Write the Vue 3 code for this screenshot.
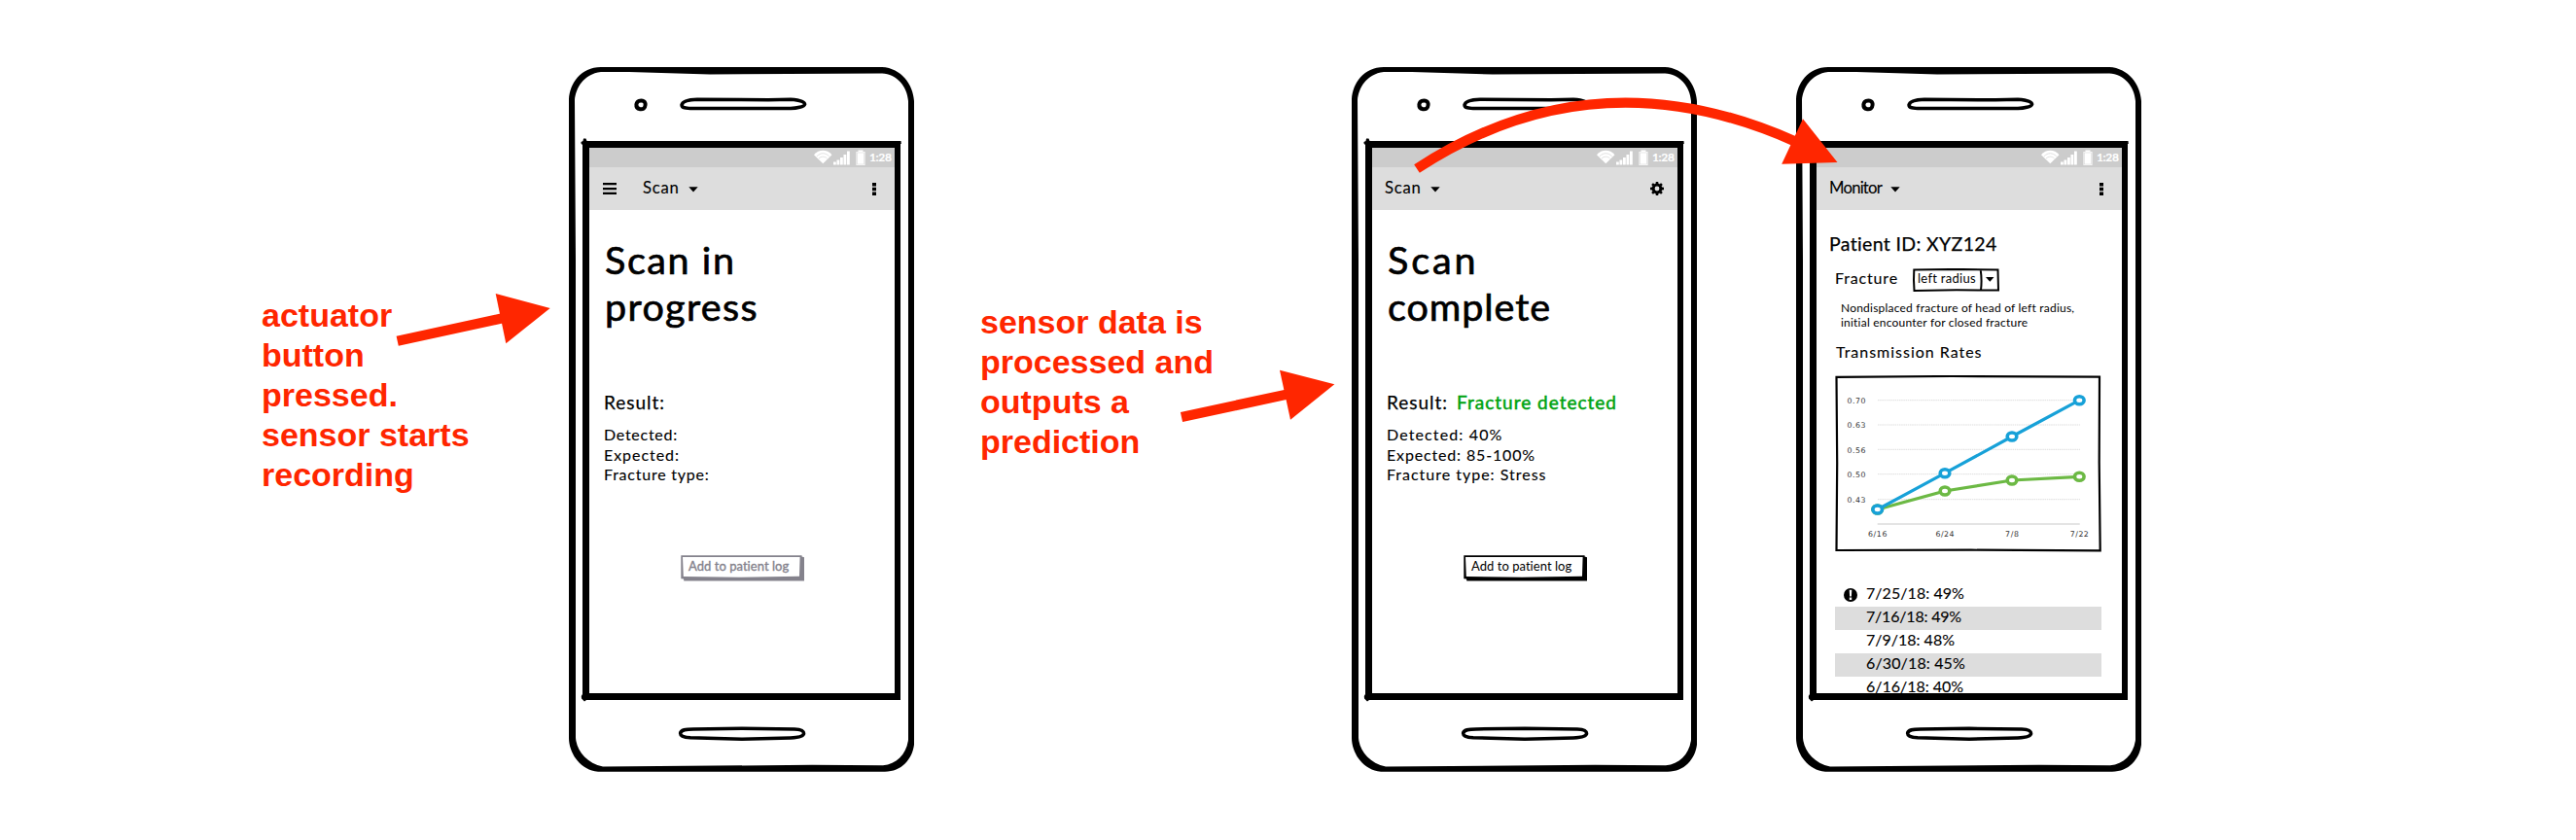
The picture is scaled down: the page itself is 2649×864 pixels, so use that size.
<script setup>
// Spreads the letters of a label so that it fills the given width in pixels.
const vFit = {
  mounted(el, { value }) {
    const natural = el.getBoundingClientRect().width
    el.style.letterSpacing = (value - natural) / el.textContent.length + 'px'
  },
}

const phones = [
  {
    id: 'progress', menu: true, label: 'Scan', labelWidth: 37.5, action: 'more',
    title: [['Scan in', 134.5], ['progress', 158]],
    result: null,
    details: [['Detected:', 76], ['Expected:', 78], ['Fracture type:', 108.5]],
    disabled: true,
  },
  {
    id: 'complete', menu: false, label: 'Scan', labelWidth: 37.5, action: 'gear',
    title: [['Scan', 93.5], ['complete', 168]],
    result: 'Fracture detected',
    details: [['Detected: 40%', 119.5], ['Expected: 85-100%', 153], ['Fracture type: Stress', 164.5]],
    disabled: false,
  },
  { id: 'monitor', menu: false, label: 'Monitor', labelWidth: 54, action: 'more', monitor: true },
]

const gridLines = [
  { y: 25.7, label: '0.70' },
  { y: 51, label: '0.63' },
  { y: 76.3, label: '0.56' },
  { y: 101.7, label: '0.50' },
  { y: 127.7, label: '0.43' },
]
const dates = [
  { x: 43.7, label: '6/16', width: 19.5 },
  { x: 113, label: '6/24', width: 19 },
  { x: 182, label: '7/8', width: 14 },
  { x: 251.3, label: '7/22', width: 19 },
]
const series = [
  { color: '#6cb944', values: [138, 119, 108, 104.3] },
  { color: '#17a1d8', values: [138, 100.7, 63, 25.7] },
]
const linePoints = (s) => s.values.map((y, i) => `${dates[i].x},${y}`).join(' ')

const log = [
  { text: '7/25/18: 49%', width: 101, alert: true },
  { text: '7/16/18: 49%', width: 98 },
  { text: '7/9/18: 48%', width: 91 },
  { text: '6/30/18: 45%', width: 102 },
  { text: '6/16/18: 40%', width: 100 },
]
const signalBars = [3, 5, 7.5, 10.5, 14]
</script>

<template>
  <main class="board">
    <template v-for="phone in phones" :key="phone.id">
      <p v-if="phone.id === 'progress'" class="note note-first">
        actuator<br />button<br />pressed.<br />sensor starts<br />recording
      </p>
      <p v-if="phone.id === 'complete'" class="note note-second">
        sensor data is<br />processed and<br />outputs a<br />prediction
      </p>

      <section class="phone" :class="phone.id">
        <svg class="shell" viewBox="-4 -4 363 733" width="363" height="733">
          <path
            fill-rule="evenodd"
            d="M0 33 C1 17 12 0 33 0 L322 0 C342 1 354 18 355 35 L355 697 C353 712 342 724.7 325 724.7 L30 724.7 C11 723 0 705 0 690 Z
               M6 34 C7 22 15 7 33 5 L62 5 L145 7.5 L322 6.5 C337 7 348 20 349 35 L349 692 C347 707 337 717 323 718.3 L250 717.8 L35 719.5 C18 716 8 703 7 690 L7 200 Z"
          />
          <path
            class="line"
            d="M116 39 C117 35 124 33.5 132 33.3 L205 33.8 L228 33.3 C238 34 242.6 36 242.6 38.3 C242 40.8 234 42.4 228 42.6 L128 42.6 C120 42.5 116 42 116 39Z"
          />
          <path
            class="line"
            d="M114.6 685.3 C115 681.7 120 681 128 680.9 L178 680.3 L232 680.9 C239 681.2 241.6 683 241.6 685.3 C241.6 688.4 236 689.7 228 690 L178 691.2 L125 689.8 C119 689.5 114.6 688.3 114.6 685.3Z"
          />
          <path class="line camera" d="M72 34.8 C76 33.6 79 35.6 78.6 39 C78.4 42.4 76 43.6 73.2 43.2 C70 42.8 69.2 40.5 69.4 38.4 C69.8 36.3 70.6 35.2 72 34.8Z" />
          <path
            fill-rule="evenodd"
            d="M14.5 76 L15 73.5 L17.5 73.5 L18.5 76 L341.5 76 L341.8 79 L341 79 L341 651 L18 651 L16 652.5 L13 649.5 L12.8 647 L14 645 L14 80 L12.5 78.5 L12.5 77Z
               M21 83 V644 H335 V83Z"
          />
        </svg>

        <div class="screen">
          <div class="status">
            <svg viewBox="0 0 54 16" width="54" height="16">
              <path fill="#fff" d="M0 5.200 C5 -.6 13.600 -.6 18.500 5.200 L9.300 14.200Z" />
              <g fill="none" stroke="#ccc" stroke-width=".6">
                <path d="M2.800 6.900 C7 2.700 11.700 2.700 15.800 6.900" />
                <path d="M5 9 C7.600 6.600 11 6.600 13.600 9" />
              </g>
              <rect v-for="(h, i) in signalBars" :key="h" :x="20 + i * 3.5" :y="15.500 - h" width="2.800" :height="h" fill="#fff" />
              <path fill="#fff" d="M43.500 2 h2 v-1.400 h5 v1.400 h2 v14 h-9z" />
              <rect x="44.500" y="3" width="7" height="12" fill="none" stroke="#ddd" stroke-width=".7" />
            </svg>
            <span v-fit="22.500">1:28</span>
          </div>

          <header class="toolbar">
            <svg v-if="phone.menu" class="menu" viewBox="0 0 14 12" width="14" height="12">
              <path d="M0 0h14v2.300H0zM0 4.900h14v2.300H0zM0 9.700h14v2.300H0z" />
            </svg>
            <span v-fit="phone.labelWidth" class="label">{{ phone.label }}</span>
            <svg class="caret" viewBox="0 0 10 6" width="10" height="6"><path d="M.3.300h9.400L5 5.600z" /></svg>
            <svg v-if="phone.action === 'more'" class="action more" viewBox="0 0 4 13" width="4" height="13">
              <path d="M0 0h4v3.500H0zM0 4.700h4v3.500H0zM0 9.500h4v3.500H0z" />
            </svg>
            <svg v-else class="action" viewBox="-7 -7 14 14" width="14" height="14">
              <circle r="3.900" fill="none" stroke="#000" stroke-width="3" />
              <path
                v-for="a in 8" :key="a" :transform="`rotate(${a * 45})`"
                d="M-1.400 -4.800L-1.200 -7H1.200L1.400 -4.800z"
              />
            </svg>
          </header>

          <div v-if="phone.monitor" class="monitor-body">
            <h2 class="patient"><span v-fit="173">Patient ID: XYZ124</span></h2>
            <div class="field">
              <span v-fit="65" class="field-name">Fracture</span>
              <div class="select">
                <svg class="outline" viewBox="0 0 89 24" width="89" height="24">
                  <path d="M1.300 1.500 L45 .9 L87.500 1.600 L88 22.500 L45 22.300 L1.500 22.900 L1 12Z M69.700 1.300 Q71.300 12 70 22.500" />
                  <path class="solid" d="M75 9h8.500l-4.200 4.700z" />
                </svg>
                <span v-fit="59.500">left radius</span>
              </div>
            </div>
            <p class="description">
              <span v-fit="240">Nondisplaced fracture of head of left radius,</span><br />
              <span v-fit="192.500">initial encounter for closed fracture</span>
            </p>
            <h3 class="rates"><span v-fit="150.500">Transmission Rates</span></h3>

            <svg class="chart" viewBox="0 0 274 182" width="274" height="182">
              <path class="box" d="M1.500 1.800 L120 1 L272 1.700 L271.700 90 L272.700 180.300 L140 179.700 L1.500 180 L2.200 90Z" />
              <g v-for="line in gridLines" :key="line.label">
                <line class="grid" x1="44" x2="252" :y1="line.y" :y2="line.y" />
                <text x="12.500" :y="line.y + 3.200" textLength="19">{{ line.label }}</text>
              </g>
              <line class="axis" x1="43.700" x2="251.700" y1="153" y2="153" />
              <text v-for="d in dates" :key="d.label" class="date" :x="d.x" y="166.300" :textLength="d.width">{{ d.label }}</text>
              <g v-for="s in series" :key="s.color" :stroke="s.color">
                <polyline :points="linePoints(s)" />
                <ellipse v-for="(y, i) in s.values" :key="i" :cx="dates[i].x" :cy="y" rx="4.800" ry="4" />
              </g>
            </svg>

            <ul class="log">
              <li v-for="row in log" :key="row.text">
                <svg v-if="row.alert" class="alert" viewBox="-7 -7 14 14" width="14" height="14">
                  <circle r="7" />
                  <path fill="#fff" d="M-1.300 -5.200h2.600L.9 1.400H-.9zM-1.200 2.600h2.400v2.300h-2.400z" />
                </svg>
                <span v-fit="row.width">{{ row.text }}</span>
              </li>
            </ul>
          </div>

          <div v-else class="scan-body">
            <h1>
              <template v-for="[text, width] in phone.title" :key="text">
                <span v-fit="width">{{ text }}</span><br />
              </template>
            </h1>
            <p class="result">
              <span v-fit="63">Result:</span>
              <span v-if="phone.result" v-fit="165" class="found">{{ phone.result }}</span>
            </p>
            <p class="details">
              <template v-for="[text, width] in phone.details" :key="text">
                <span v-fit="width">{{ text }}</span><br />
              </template>
            </p>
            <button class="add" :class="{ disabled: phone.disabled }" :disabled="phone.disabled">
              <svg class="outline" viewBox="0 0 127 27" width="127" height="27">
                <path
                  fill-rule="evenodd"
                  d="M.3 .2 L124.600 .2 L124.600 1.600 L127 2.200 L127 26.500 L3.300 26.500 L3 24.500 L.3 24.200Z M2 2 L2.800 22 L60 22.700 L122 21.800 L122.600 2Z"
                />
              </svg>
              <span v-fit="103.500">Add to patient log</span>
            </button>
          </div>
        </div>
      </section>
    </template>

    <svg class="arrows" viewBox="0 0 2649 864" width="2649" height="864">
      <path class="shaft" d="M408.700 350.800 L518 327" />
      <path d="M509.700 302 L565.700 317 L520.300 353.300Z" />
      <path class="shaft" d="M1215 429 L1324 405.500" />
      <path d="M1316 380.700 L1372.300 395.300 L1327 431.700Z" />
      <path class="shaft" d="M1457 173.500 Q1640 53.500 1846 145.500" />
      <path d="M1854 122.300 L1889.500 167 L1832.200 168.700Z" />
    </svg>
  </main>
</template>

<style>
body {
  margin: 0;
  background: #fff;
}
</style>

<style scoped>
.board {
  position: relative;
  display: flex;
  align-items: flex-start;
  box-sizing: border-box;
  width: 2649px;
  height: 864px;
  padding-left: 269px;
  overflow: hidden;
  background: #fff;
  color: #000;
  font-family: Lato, "Open Sans", sans-serif;
}
h1, h2, h3, p, ul {
  margin: 0;
  padding: 0;
  font-weight: 400;
}
.note {
  flex: none;
  color: #ff2600;
  font: 700 34px/41px "Liberation Sans", Arial, sans-serif;
  white-space: nowrap;
}
.note-first {
  width: 316px;
  margin-top: 304px;
}
.note-second {
  width: 382px;
  margin: 311px 0 0 68px;
}
.phone {
  position: relative;
  flex: none;
  width: 355px;
  height: 725px;
  margin-top: 69px;
}
.monitor {
  margin-left: 102px;
}
.shell {
  position: absolute;
  left: -4px;
  top: -4px;
}
.line {
  fill: none;
  stroke: #000;
  stroke-width: 3.5;
}
.camera {
  stroke-width: 4;
}
.screen {
  width: 314px;
  height: 561px;
  margin: 83px 0 0 21px;
  overflow: hidden;
  position: relative;
  -webkit-text-stroke: 0.12px currentColor;
}
.screen span {
  display: inline-block;
  white-space: pre;
}
.status {
  display: flex;
  justify-content: flex-end;
  height: 20px;
  padding-right: 3.500px;
  background: #ccc;
  color: #fff;
  font-size: 12px;
  font-weight: 700;
  line-height: 19px;
}
.status svg {
  margin: 2px 3px 0 0;
}
.toolbar {
  display: flex;
  align-items: center;
  height: 44px;
  padding: 0 19px 0 13px;
  background: #ddd;
  font-size: 16.7px;
  line-height: 40px;
}
.label {
  margin-top: -2px;
}
.menu {
  margin: 0 27px 0 1px;
}
.caret {
  margin: 1px 0 0 9px;
}
.action {
  margin: 0 -5px 0 auto;
}
.more {
  margin-right: 0;
}
.scan-body {
  padding: 26.800px 0 0 15px;
}
h1 {
  height: 96px;
  padding-left: 1px;
  font-size: 39.5px;
  line-height: 48px;
  -webkit-text-stroke-width: 0.7px;
}
.result {
  display: flex;
  gap: 9px;
  margin-top: 63px;
  font-size: 19px;
  line-height: 24px;
  -webkit-text-stroke-width: 0.25px;
}
.found {
  color: #00a310;
  -webkit-text-stroke-width: 0.5px;
}
.details {
  height: 61px;
  margin-top: 11.700px;
  font-size: 16px;
  line-height: 20.300px;
}
.details span, h1 span, .description span {
  vertical-align: top;
}
.add {
  position: relative;
  display: block;
  width: 127px;
  height: 27px;
  margin: 72.500px 0 0 79px;
  padding: 0 0 0 8px;
  border: 0;
  background: none;
  color: #000;
  font: 13px/23.400px Lato, sans-serif;
  text-align: left;
  -webkit-text-stroke-width: 0;
}
.add span {
  display: block;
  width: max-content;
  height: 27px;
}
.disabled {
  color: #84828c;
  -webkit-text-stroke-width: 0.35px;
}
.outline {
  position: absolute;
  left: 0;
  top: 0;
  fill: currentColor;
}
.monitor-body {
  padding: 22.500px 0 0 13px;
}
.patient {
  font-size: 19.500px;
  line-height: 24px;
  -webkit-text-stroke-width: 0.25px;
}
.field {
  display: flex;
  margin: 13.800px 0 0 6px;
  font-size: 16px;
  line-height: 19px;
}
.select {
  position: relative;
  width: 89px;
  height: 23.400px;
  margin-left: 15px;
  padding-left: 5px;
  font-size: 13px;
  line-height: 21.400px;
  -webkit-text-stroke-width: 0;
}
.select .outline {
  fill: none;
  stroke: #000;
  stroke-width: 2;
}
.select .solid {
  fill: #000;
  stroke: none;
}
.description {
  height: 30px;
  margin: 9.500px 0 0 12px;
  font-size: 12px;
  line-height: 15px;
  -webkit-text-stroke-width: 0;
}
.rates {
  margin: 12.600px 0 0 7px;
  font-size: 16px;
  line-height: 20px;
}
.chart {
  display: block;
  margin: 14.200px 0 0 6px;
  -webkit-text-stroke: 0;
}
.chart text {
  fill: #333;
  stroke: none;
  font: 7.800px "DejaVu Sans", sans-serif;
}
.chart .date {
  text-anchor: middle;
}
.chart .box {
  fill: none;
  stroke: #000;
  stroke-width: 2.200;
}
.chart .grid {
  stroke: #ddd;
  stroke-width: 1;
  stroke-dasharray: 1.500 0.700;
}
.chart .axis {
  stroke: #e4e4e4;
  stroke-width: 2;
}
.chart polyline {
  fill: none;
  stroke-width: 3.200;
}
.chart ellipse {
  fill: #fff;
  stroke-width: 3.600;
}
.log {
  width: 274px;
  margin: 32.500px 0 0 6px;
  list-style: none;
  font-size: 16px;
  line-height: 20.500px;
}
.log li {
  display: flex;
  box-sizing: border-box;
  height: 24px;
  padding-left: 32px;
}
.log li:nth-child(even) {
  background: #ddd;
}
.alert {
  margin: 5px 9px 0 -23px;
}
.arrows {
  position: absolute;
  left: 0;
  top: 0;
  fill: #ff2600;
}
.shaft {
  fill: none;
  stroke: #ff2600;
  stroke-width: 10.300;
}
</style>
